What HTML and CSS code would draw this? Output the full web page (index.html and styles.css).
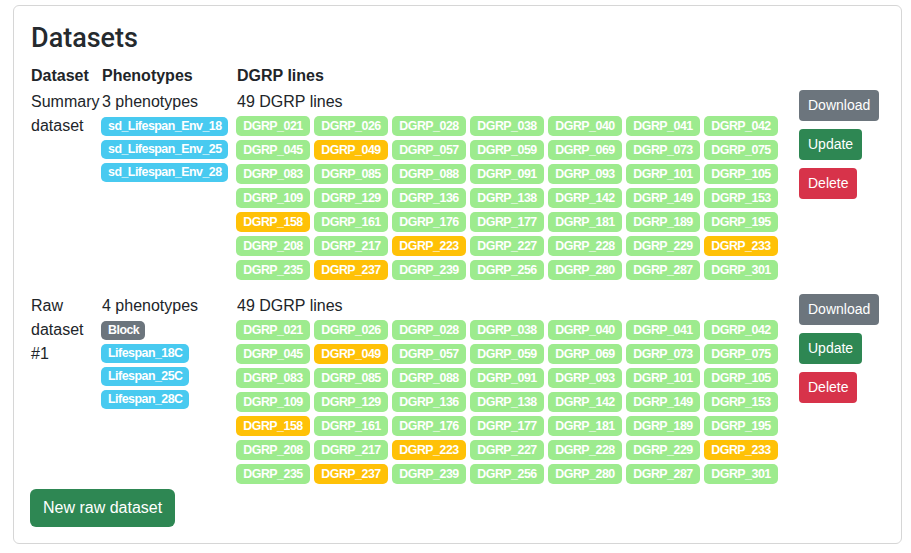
FILE: index.html
```html
<!DOCTYPE html>
<html>
<head>
<meta charset="utf-8">
<link rel="stylesheet" href="styles.css">
</head>
<body>
<div class="page">
  <div class="card">
    <h3 class="title">Datasets</h3>
    <div class="ds-row head">
      <div>Dataset</div>
      <div>Phenotypes</div>
      <div>DGRP lines</div>
      <div></div>
    </div>

    <div class="ds-row">
      <div class="cell-name">Summary dataset</div>
      <div class="cell-pheno">
        <div class="line">3 phenotypes</div>
        <div class="stack">
          <span class="badge info">sd_Lifespan_Env_18</span>
          <span class="badge info">sd_Lifespan_Env_25</span>
          <span class="badge info">sd_Lifespan_Env_28</span>
        </div>
      </div>
      <div class="cell-lines">
        <div class="line">49 DGRP lines</div>
        <div class="lines">
          <span class="badge g">DGRP_021</span><span class="badge g">DGRP_026</span><span class="badge g">DGRP_028</span><span class="badge g">DGRP_038</span><span class="badge g">DGRP_040</span><span class="badge g">DGRP_041</span><span class="badge g">DGRP_042</span>
          <span class="badge g">DGRP_045</span><span class="badge y">DGRP_049</span><span class="badge g">DGRP_057</span><span class="badge g">DGRP_059</span><span class="badge g">DGRP_069</span><span class="badge g">DGRP_073</span><span class="badge g">DGRP_075</span>
          <span class="badge g">DGRP_083</span><span class="badge g">DGRP_085</span><span class="badge g">DGRP_088</span><span class="badge g">DGRP_091</span><span class="badge g">DGRP_093</span><span class="badge g">DGRP_101</span><span class="badge g">DGRP_105</span>
          <span class="badge g">DGRP_109</span><span class="badge g">DGRP_129</span><span class="badge g">DGRP_136</span><span class="badge g">DGRP_138</span><span class="badge g">DGRP_142</span><span class="badge g">DGRP_149</span><span class="badge g">DGRP_153</span>
          <span class="badge y">DGRP_158</span><span class="badge g">DGRP_161</span><span class="badge g">DGRP_176</span><span class="badge g">DGRP_177</span><span class="badge g">DGRP_181</span><span class="badge g">DGRP_189</span><span class="badge g">DGRP_195</span>
          <span class="badge g">DGRP_208</span><span class="badge g">DGRP_217</span><span class="badge y">DGRP_223</span><span class="badge g">DGRP_227</span><span class="badge g">DGRP_228</span><span class="badge g">DGRP_229</span><span class="badge y">DGRP_233</span>
          <span class="badge g">DGRP_235</span><span class="badge y">DGRP_237</span><span class="badge g">DGRP_239</span><span class="badge g">DGRP_256</span><span class="badge g">DGRP_280</span><span class="badge g">DGRP_287</span><span class="badge g">DGRP_301</span>
        </div>
      </div>
      <div class="cell-actions">
        <button class="btn-sm secondary">Download</button>
        <button class="btn-sm success">Update</button>
        <button class="btn-sm danger">Delete</button>
      </div>
    </div>

    <div class="ds-row second">
      <div class="cell-name">Raw dataset #1</div>
      <div class="cell-pheno">
        <div class="line">4 phenotypes</div>
        <div class="stack">
          <span class="badge gray">Block</span>
          <span class="badge info">Lifespan_18C</span>
          <span class="badge info">Lifespan_25C</span>
          <span class="badge info">Lifespan_28C</span>
        </div>
      </div>
      <div class="cell-lines">
        <div class="line">49 DGRP lines</div>
        <div class="lines">
          <span class="badge g">DGRP_021</span><span class="badge g">DGRP_026</span><span class="badge g">DGRP_028</span><span class="badge g">DGRP_038</span><span class="badge g">DGRP_040</span><span class="badge g">DGRP_041</span><span class="badge g">DGRP_042</span>
          <span class="badge g">DGRP_045</span><span class="badge y">DGRP_049</span><span class="badge g">DGRP_057</span><span class="badge g">DGRP_059</span><span class="badge g">DGRP_069</span><span class="badge g">DGRP_073</span><span class="badge g">DGRP_075</span>
          <span class="badge g">DGRP_083</span><span class="badge g">DGRP_085</span><span class="badge g">DGRP_088</span><span class="badge g">DGRP_091</span><span class="badge g">DGRP_093</span><span class="badge g">DGRP_101</span><span class="badge g">DGRP_105</span>
          <span class="badge g">DGRP_109</span><span class="badge g">DGRP_129</span><span class="badge g">DGRP_136</span><span class="badge g">DGRP_138</span><span class="badge g">DGRP_142</span><span class="badge g">DGRP_149</span><span class="badge g">DGRP_153</span>
          <span class="badge y">DGRP_158</span><span class="badge g">DGRP_161</span><span class="badge g">DGRP_176</span><span class="badge g">DGRP_177</span><span class="badge g">DGRP_181</span><span class="badge g">DGRP_189</span><span class="badge g">DGRP_195</span>
          <span class="badge g">DGRP_208</span><span class="badge g">DGRP_217</span><span class="badge y">DGRP_223</span><span class="badge g">DGRP_227</span><span class="badge g">DGRP_228</span><span class="badge g">DGRP_229</span><span class="badge y">DGRP_233</span>
          <span class="badge g">DGRP_235</span><span class="badge y">DGRP_237</span><span class="badge g">DGRP_239</span><span class="badge g">DGRP_256</span><span class="badge g">DGRP_280</span><span class="badge g">DGRP_287</span><span class="badge g">DGRP_301</span>
        </div>
      </div>
      <div class="cell-actions">
        <button class="btn-sm secondary">Download</button>
        <button class="btn-sm success">Update</button>
        <button class="btn-sm danger">Delete</button>
      </div>
    </div>

    <button class="btn success new">New raw dataset</button>
  </div>
</div>
</body>
</html>
```

FILE: styles.css
```css
* { box-sizing: border-box; }

html, body {
  margin: 0;
  padding: 0;
  background: #ffffff;
}

body {
  font-family: "Segoe UI", "Liberation Sans", Arial, sans-serif;
  font-size: 16px;
  line-height: 24px;
  color: #212529;
}

.page {
  padding: 5px 9px 10px 13px;
}

.card {
  border: 1px solid #d6d6d6;
  border-radius: 6px;
  padding: 16px;
  background: #fff;
}

.title {
  margin: 0 0 8px 1px;
  font-family: Roboto, "Liberation Sans", sans-serif;
  font-size: 27px;
  font-weight: 500;
  line-height: 33.6px;
  color: #252a2e;
}

.ds-row {
  display: grid;
  grid-template-columns: 71px 135px 563px auto;
  align-items: start;
}

.ds-row.head {
  font-weight: bold;
  margin-bottom: 2px;
}

.ds-row.head > div {
  padding-left: 1px;
}

.ds-row.second {
  margin-top: 14px;
}

.cell-name {
  padding-left: 1px;
  padding-right: 2px;
}

.line {
  padding-left: 1px;
}

.stack {
  display: flex;
  flex-direction: column;
  align-items: flex-start;
  gap: 4px;
  margin-top: 3px;
}

.lines {
  display: flex;
  flex-wrap: wrap;
  gap: 4px 4px;
  margin-top: 2px;
  width: 550px;
}

.badge {
  display: inline-block;
  font-size: 12.4px;
  font-weight: bold;
  line-height: 12px;
  padding: 4px 6px 4px 7px;
  color: #fff;
  border-radius: 5px;
  letter-spacing: -0.5px;
  white-space: nowrap;
}

.stack .badge {
  height: 19px;
  padding-top: 3.5px;
}

.lines .badge {
  width: 74px;
  height: 20px;
  text-align: center;
  padding-left: 0;
  padding-right: 0;
}

.badge.g { background: #9deb8e; }
.badge.y { background: #ffc107; }
.badge.info { background: #48caf0; }
.badge.gray { background: #6c757d; }

.cell-actions {
  display: flex;
  flex-direction: column;
  align-items: flex-start;
  gap: 8px;
}

button {
  font-family: inherit;
  color: #fff;
  border: 1px solid transparent;
  cursor: pointer;
}

.btn-sm {
  font-size: 14px;
  line-height: 21px;
  padding: 4px 8px;
  border-radius: 4px;
}

.btn {
  font-size: 16px;
  line-height: 24px;
  padding: 6px 12px;
  border-radius: 6px;
}

.secondary { background: #6c757d; }
.success { background: #2e8753; }
.danger { background: #d7334a; }

.new {
  margin-top: 5px;
  display: block;
}
```
